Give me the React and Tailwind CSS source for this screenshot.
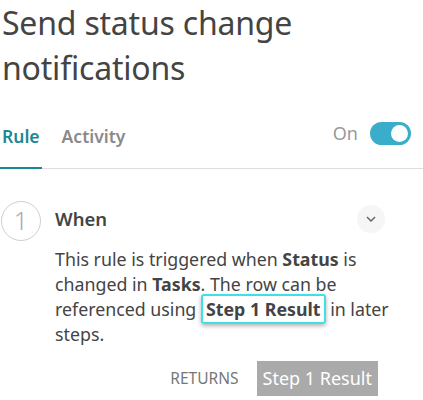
import React, { useState } from "react";

const font = { fontFamily: '"Noto Sans", "Open Sans", sans-serif' };

const App = () => {
  const [enabled, setEnabled] = useState(true);
  const [tab, setTab] = useState("rule");

  return (
    <div className="w-[423px] h-[400px] bg-white overflow-hidden" style={font}>
      <h1 className="text-[32px] leading-[45px] text-[#444] pl-[2px] tracking-[-0.2px]">
        Send status change notifications
      </h1>

      <div className="mt-[30px] flex items-end justify-between border-b border-[#dedede]">
        <div className="flex items-end gap-[20px]">
          <button
            className={
              "pb-[18px] text-[17.5px] font-semibold px-[2px] border-b-2 -mb-px " +
              (tab === "rule"
                ? "text-[#1b8992] border-[#1b8992]"
                : "text-[#8a8a8a] border-transparent")
            }
            onClick={() => setTab("rule")}
          >
            Rule
          </button>
          <button
            className={
              "pb-[18px] text-[17.5px] font-semibold border-b-2 -mb-px " +
              (tab === "activity"
                ? "text-[#1b8992] border-[#1b8992]"
                : "text-[#8a8a8a] border-transparent")
            }
            onClick={() => setTab("activity")}
          >
            Activity
          </button>
        </div>
        <div className="flex items-center gap-[12px] pb-[21px] pr-[12px]">
          <span className="text-[18px] text-[#999]">{enabled ? "On" : "Off"}</span>
          <button
            onClick={() => setEnabled(!enabled)}
            className={
              "w-[41px] h-[23px] rounded-full p-[3px] flex " +
              (enabled ? "bg-[#3aadca] justify-end" : "bg-[#ccc] justify-start")
            }
          >
            <span className="w-[17px] h-[17px] rounded-full bg-white" />
          </button>
        </div>
      </div>

      <div className="mt-[32px] flex items-start">
        <div className="w-[40px] h-[40px] shrink-0 rounded-full border border-[#cfcfcf] flex items-center justify-center text-[25px] text-[#aaa] font-light ml-[1px]">
          1
        </div>
        <div className="ml-[14px] flex-1 pr-[14px]">
          <div className="flex items-center justify-between h-[36px]">
            <span className="text-[18.5px] font-semibold text-[#444]">When</span>
            <button className="w-[28px] h-[28px] rounded-full bg-[#f6f6f6] flex items-center justify-center mr-[24px]">
              <svg width="10" height="6" viewBox="0 0 10 6" fill="none">
                <path d="M1 1l4 4 4-4" stroke="#666" strokeWidth="1.5" />
              </svg>
            </button>
          </div>
          <p className="mt-[10px] text-[17.8px] leading-[25px] text-[#444]">
            This rule is triggered when <b className="font-bold">Status</b> is
            changed in <b className="font-bold">Tasks</b>. The row can be
            referenced using{" "}
            <span className="font-bold px-[3px] py-[1px] rounded-[3px] border-2 border-[#3ee0e6] shadow-[0_2px_4px_rgba(0,0,0,0.3)]">
              Step 1 Result
            </span>{" "}
            in later steps.
          </p>
          <div className="mt-[14px] flex items-center justify-end gap-[18px] pr-[31px]">
            <span className="text-[15.5px] text-[#777] uppercase">Returns</span>
            <span className="bg-[#aaa] text-white text-[18px] px-[6px] py-[4px]">
              Step 1 Result
            </span>
          </div>
        </div>
      </div>
    </div>
  );
};

export default App;
